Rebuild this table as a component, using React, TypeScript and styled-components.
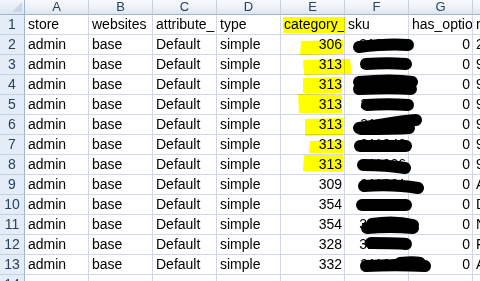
import React from "react";
import styled, { createGlobalStyle } from "styled-components";

const GlobalStyle = createGlobalStyle`
  html, body {
    margin: 0;
    padding: 0;
    background: #ffffff;
    overflow: hidden;
  }
  body {
    font-family: "Liberation Sans", Arial, sans-serif;
  }
`;

const Sheet = styled.div`
  position: relative;
  width: 480px;
  height: 281px;
  overflow: hidden;
`;

const Grid = styled.div`
  display: grid;
  grid-template-columns: 25px repeat(7, 64px) 64px;
  grid-auto-rows: 20px;
  grid-template-rows: 15px;
  width: 602px;
`;

const Corner = styled.div`
  position: relative;
  background: linear-gradient(#f4f7fb, #dbe4f0);
  border-right: 1px solid #9eb6ce;
  border-bottom: 1px solid #9eb6ce;
  box-sizing: border-box;
  &::after {
    content: "";
    position: absolute;
    right: 2px;
    bottom: 2px;
    border-left: 10px solid transparent;
    border-bottom: 10px solid #c9d5e4;
  }
`;

const ColHead = styled.div`
  background: linear-gradient(#f7f9fc 0%, #eef2f8 50%, #dde5ef 100%);
  border-right: 1px solid #c5d1de;
  border-bottom: 1px solid #9eb6ce;
  box-sizing: border-box;
  font-size: 13px;
  line-height: 14px;
  color: #27415f;
  text-align: center;
`;

const RowHead = styled.div`
  background: #e4ecf7;
  border-right: 1px solid #9eb6ce;
  border-bottom: 1px solid #c5d1de;
  box-sizing: border-box;
  font-size: 14px;
  color: #27415f;
  display: flex;
  align-items: flex-end;
  justify-content: center;
  padding-bottom: 2px;
`;

const Cell = styled.div<{ $num?: boolean }>`
  border-right: 1px solid #d0d7e5;
  border-bottom: 1px solid #d0d7e5;
  box-sizing: border-box;
  font-size: 14px;
  color: #000000;
  white-space: nowrap;
  overflow: hidden;
  display: flex;
  align-items: flex-end;
  justify-content: ${(p) => (p.$num ? "flex-end" : "flex-start")};
  padding: 0 2px 2px 3px;
`;

const Marks = styled.svg`
  position: absolute;
  left: 0;
  top: 0;
  width: 480px;
  height: 281px;
  pointer-events: none;
`;

const Highlights = styled(Marks)`
  mix-blend-mode: multiply;
`;

const cols = ["A", "B", "C", "D", "E", "F", "G", "H"];
const header = ["store", "websites", "attribute_", "type", "category_", "sku", "has_optio", "r"];

const cats = ["306", "313", "313", "313", "313", "313", "313", "309", "354", "354", "328", "332"];
const skus = ["310827", "311980", "311972", "311965", "311957", "311948", "311936", "311921", "312047", "312033", "312010", "311998"];
const names = ["2", "9", "9", "9", "9", "9", "9", "A", "D", "N", "F", "A"];

const yellow = [
  "M301 41 L343 40 L343 54 L300 55 Z",
  "M303 60 L350 59 L352 74 L304 75 Z",
  "M303 78 L342 77 L342 93 L303 93 Z",
  "M298 94 L342 95 L342 113 L299 113 Z",
  "M305 119 L343 118 L343 135 L305 136 Z",
  "M310 141 L343 140 L343 153 L309 153 Z",
  "M304 155 L343 155 L343 172 L303 171 Z",
];

// marker strokes that hide the sku values, one group per row
const scribbles = [
  "M359 47 C375 45 395 44 408 45",
  "M366 64 C380 63 395 63 406 64",
  "M359 82 C380 80 400 80 412 82 M359 89 C380 88 400 88 411 89",
  "M367 105 C380 104 395 104 408 105",
  "M359 128 C380 125 400 121 416 120 M361 129 C380 129 395 129 409 128",
  "M360 146 C375 146 395 146 406 146",
  "M363 165 C378 165 393 166 405 168",
  "M364 186 C380 185 400 185 418 188",
  "M362 205 C378 205 395 205 406 205",
  "M372 224 C385 222 400 222 413 225 M367 228 C380 227 400 227 413 228",
  "M371 243 C385 243 398 243 406 244",
  "M366 266 C385 265 405 265 425 266 M400 263 C410 262 415 262 420 263",
];

export default function App() {
  return (
    <>
      <GlobalStyle />
      <Sheet>
        <Grid>
          <Corner />
          {cols.map((c) => (
            <ColHead key={c}>{c}</ColHead>
          ))}
          <RowHead>1</RowHead>
          {header.map((h) => (
            <Cell key={h}>{h}</Cell>
          ))}
          {cats.map((cat, i) => (
            <React.Fragment key={i}>
              <RowHead>{i + 2}</RowHead>
              <Cell>admin</Cell>
              <Cell>base</Cell>
              <Cell>Default</Cell>
              <Cell>simple</Cell>
              <Cell $num>{cat}</Cell>
              <Cell $num>{skus[i]}</Cell>
              <Cell $num>0</Cell>
              <Cell>{names[i]}</Cell>
            </React.Fragment>
          ))}
          <RowHead>14</RowHead>
          {cols.map((c) => (
            <Cell key={"e" + c} />
          ))}
        </Grid>
        <Highlights viewBox="0 0 480 281">
          <path d="M283 17 L345 17 L345 33 L283 33 Z" fill="#ffff00" />
          {yellow.map((d, i) => (
            <path key={i} d={d} fill="#ffff00" />
          ))}
        </Highlights>
        <Marks viewBox="0 0 480 281">
          {scribbles.map((d, i) => (
            <path
              key={i}
              d={d}
              fill="none"
              stroke="#000000"
              strokeWidth={12}
              strokeLinecap="round"
            />
          ))}
        </Marks>
      </Sheet>
    </>
  );
}
